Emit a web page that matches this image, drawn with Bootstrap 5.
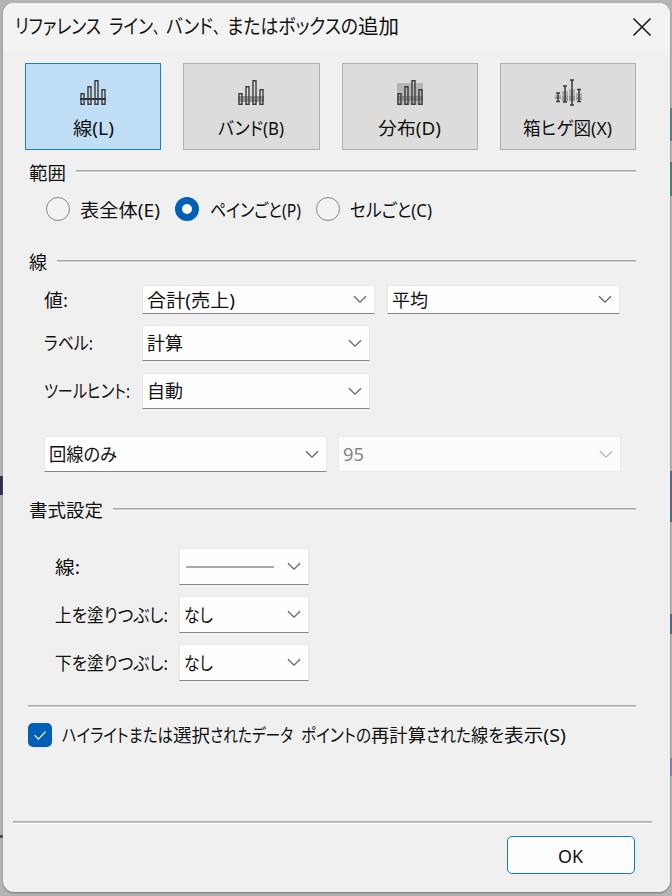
<!DOCTYPE html>
<html lang="ja">
<head>
<meta charset="utf-8">
<meta name="viewport" content="width=device-width, initial-scale=1">
<title>リファレンス ライン、バンド、またはボックスの追加</title>
<link rel="stylesheet" href="https://cdn.jsdelivr.net/npm/bootstrap@5.3.0/dist/css/bootstrap.min.css">
<style>
body{height:896px;overflow:hidden;background:#b4b4b4;color:#111;font-family:"Noto Sans","Noto Sans CJK JP",sans-serif;font-size:18.3px;line-height:24px;padding:3px 2px 4px 3px}
.backdrop-edge{position:absolute;width:3px}
.e1{left:669px;top:108px;height:33px;background:#4d8290}
.e2{left:669px;top:162px;height:34px;background:#2f8d70}
.e3{left:669px;top:471px;height:51px;background:#4b6887}
.e4{left:669px;top:614px;height:20px;background:#4b6887}
.e5{left:669px;top:758px;height:18px;background:#7887ae}
.e6{left:0;top:476px;height:19px;background:#2c2c4c}
.e7{left:0;top:835px;height:3px;background:#5e4936}
.dialog-win{position:relative;height:889px;background:#f0f0f0;border-radius:11px;overflow:hidden;box-shadow:0 1px 2px #777}
.title-strip{height:50px;background:#f3f3f3;padding:0 18.5px 2px 12px;font-size:20px}
.fit{display:inline-block;white-space:nowrap;transform-origin:0 50%;font-feature-settings:"palt"}
.fit.full{font-feature-settings:normal}
.tiles{gap:22px;padding:10px 34px 0 22px}
.tile{height:87px;border:1.5px solid #b0b0b0;border-radius:0;background:#dcdcdc;padding:6px 0 0;color:#111;font-size:18.3px;line-height:24px}
.tile.active{background:#c0def5!important;border-color:#1183d9!important;color:#111!important}
.tile svg{display:block;margin:0 auto 9px}
.rule{height:3px;background:linear-gradient(#a8a8a8 0 1px,#c9c9c9 1px 2px,#fbfbfb 2px)}
.sec{height:24px;padding-left:26px;padding-right:34px}
.sec .rule{margin-top:-2px;margin-left:10px}
.mt-sec1{margin-top:11px}
.mt-sec1 .rule{margin-top:-3px}
.form-check-input.rd{width:24px;height:24px;margin:0;border:1.5px solid #858585;background:#f3f3f3;box-shadow:none;flex:none}
.form-check-input.rd:checked{border:7.5px solid #005fb8;background:#fff}
.form-check-input.ck{width:24px;height:24px;margin:0;border:0;border-radius:5px;flex:none}
.form-check-input.ck:checked{background:#005fb8 url("data:image/svg+xml,%3Csvg xmlns='http://www.w3.org/2000/svg' viewBox='0 0 24 24'%3E%3Cpath d='M6.5 12.2l3.8 3.9 7.3-7.4' fill='none' stroke='white' stroke-width='1.2'/%3E%3C/svg%3E") center/24px no-repeat}
.combo{height:36.5px;background:#fefefe;border:1px solid #e8e8e8;border-bottom:1.5px solid #868686;border-radius:1px;padding:0 7px 0 4px;flex:none}
.combo.low{height:28.5px}
.combo.off{background:#fbfbfb;border-color:#ebebeb;color:#858585}
.combo svg{flex:none}
.combo.off svg{opacity:.45}
.w232{width:233px}.w228{width:228px}.w282{width:282.5px}.w130{width:130px}
.lb1{width:97.5px;flex:none}.lb2{width:124px;flex:none}
.pl1{padding-left:41px}.pl2{padding-left:52px}
.sample-line{width:88px;height:2px;background:#a9a9a9;margin-left:2px}
.radios{margin-top:12px;height:24px;padding-left:42.5px}
.radios .fit{margin-left:10.5px;margin-right:15px;position:relative;top:1px}
.radios .fit:last-child{margin-left:10px}
.sec2{margin-top:29px}
.row-a{margin-top:11px;height:29px}
.gapl{margin-left:12px}.gapl2{margin-left:11.5px}
.row-b{margin-top:10px;height:38px}
.row-c{margin-top:10px;height:38px}
.row-d{margin-top:25px;height:38px}
.sec3{margin-top:25px}
.row-e{margin-top:26px;height:37px}
.row-f{margin-top:11px;height:37px}
.rule-a{margin:24px 34px 0 25px}
.check-row{margin-top:14px;height:26px;padding-left:25px;gap:9.5px}
.rule-b{margin:73px 18px 0 10px}
.ok-row{margin-top:12px;padding-right:35px}
.btn-ok{width:128px;height:38px;border:1.5px solid #0f7bd0;border-radius:5px;background:#fdfdfd;color:#111;font-size:18.3px;padding:2px 1px 0 0}
</style>
</head>
<body>
<svg class="d-none" aria-hidden="true">
<symbol id="chev" viewBox="0 0 14 9"><path d="M1 1.2l6 6 6-6" fill="none" stroke="#666" stroke-width="1.3"/></symbol>
<symbol id="bars" viewBox="0 0 28 28"><path d="M2 14.7h3v10.600H2zM9 7.700h3v17.600H9zM16 1.700h3v23.600h-3zM23 10.700h3v14.600h-3z" fill="none" stroke="#3c3c3c" stroke-width="1.4"/></symbol>
</svg>
<i class="backdrop-edge e1"></i><i class="backdrop-edge e2"></i><i class="backdrop-edge e3"></i><i class="backdrop-edge e4"></i><i class="backdrop-edge e5"></i><i class="backdrop-edge e6"></i><i class="backdrop-edge e7"></i>
<main class="dialog-win">
<header class="title-strip d-flex align-items-center">
<div class="me-auto d-flex text-nowrap"><span class="fit me-2" data-w="86">リファレンス</span><span class="fit" data-w="44">ライン</span><span class="fit full" data-w="13">、</span><span class="fit" data-w="47">バンド</span><span class="fit full" data-w="14">、</span><span class="fit" data-w="131">またはボックスの</span><span class="fit" data-w="41">追加</span></div>
<svg width="20" height="20" viewBox="0 0 20 20"><path d="M1.500 1.500l17 17M18.500 1.500l-17 17" stroke="#191919" stroke-width="1.6"/></svg>
</header>
<div class="tiles d-flex">
<button class="btn tile active flex-fill w-100"><svg width="28" height="28"><use href="#bars"/><path d="M1 20h26" stroke="#333" stroke-width="1.8"/></svg><span class="fit" data-w="41">線(L)</span></button>
<button class="btn tile flex-fill w-100"><svg width="28" height="28"><path d="M1 17h26v6H1z" fill="#999"/><use href="#bars"/></svg><span class="fit" data-w="66">バンド(B)</span></button>
<button class="btn tile flex-fill w-100"><svg width="28" height="28"><path d="M1 4h26v13H1z" fill="#b5b5b5"/><path d="M1 17h26v5H1z" fill="#8d8d8d"/><path d="M1 22h26v4H1z" fill="#b5b5b5"/><use href="#bars"/></svg><span class="fit" data-w="63">分布(D)</span></button>
<button class="btn tile flex-fill w-100"><svg width="28" height="28"><path d="M1 16h6v4H1zM8 12h6v10H8zM15 10h6v12h-6zM22 14h6v7h-6z" fill="#b1b1b1"/><path d="M1 18h6v2H1zM8 17h6v5H8zM15 17h6v5h-6zM22 18h6v3h-6z" fill="#999"/><path d="M4 14v8.500M11 7v16M18 1v25M25 10.500v12M2 14h4M2 22.500h4M9 7h4M9 23h4M16 1h4M16 26h4M23 10.500h4M23 22.500h4" stroke="#393939" stroke-width="1.5"/></svg><span class="fit" data-w="89">箱ヒゲ図(X)</span></button>
</div>
<div class="sec d-flex align-items-center mt-sec1"><span class="fit" data-w="37">範囲</span><div class="rule flex-fill"></div></div>
<div class="radios d-flex align-items-center">
<input class="form-check-input rd" type="radio" name="scope"><span class="fit" data-w="80">表全体(E)</span>
<input class="form-check-input rd" type="radio" name="scope" checked><span class="fit" data-w="91">ペインごと(P)</span>
<input class="form-check-input rd" type="radio" name="scope"><span class="fit" data-w="82">セルごと(C)</span>
</div>
<div class="sec sec2 d-flex align-items-center"><span class="fit" data-w="18">線</span><div class="rule flex-fill"></div></div>
<div class="pl1 row-a d-flex align-items-center"><div class="lb1"><span class="fit" data-w="24">値:</span></div><div class="combo low w232 d-flex align-items-center justify-content-between"><span class="fit" data-w="88">合計(売上)</span><svg width="14" height="9"><use href="#chev"/></svg></div><div class="combo low w232 d-flex align-items-center justify-content-between gapl"><span class="fit" data-w="36">平均</span><svg width="14" height="9"><use href="#chev"/></svg></div></div>
<div class="pl1 row-b d-flex align-items-center"><div class="lb1"><span class="fit" data-w="49">ラベル:</span></div><div class="combo w228 d-flex align-items-center justify-content-between"><span class="fit" data-w="36">計算</span><svg width="14" height="9"><use href="#chev"/></svg></div></div>
<div class="pl1 row-c d-flex align-items-center"><div class="lb1"><span class="fit" data-w="86">ツールヒント:</span></div><div class="combo w228 d-flex align-items-center justify-content-between"><span class="fit" data-w="36">自動</span><svg width="14" height="9"><use href="#chev"/></svg></div></div>
<div class="pl1 row-d d-flex align-items-center"><div class="combo w282 d-flex align-items-center justify-content-between"><span class="fit" data-w="68">回線のみ</span><svg width="14" height="9"><use href="#chev"/></svg></div><div class="combo off w282 d-flex align-items-center justify-content-between gapl2"><span class="fit" data-w="21">95</span><svg width="14" height="9"><use href="#chev"/></svg></div></div>
<div class="sec sec3 d-flex align-items-center"><span class="fit" data-w="74">書式設定</span><div class="rule flex-fill"></div></div>
<div class="pl2 row-e d-flex align-items-center"><div class="lb2"><span class="fit" data-w="25">線:</span></div><div class="combo w130 d-flex align-items-center justify-content-between"><span class="sample-line"></span><svg width="14" height="9"><use href="#chev"/></svg></div></div>
<div class="pl2 row-f d-flex align-items-center"><div class="lb2"><span class="fit" data-w="113">上を塗りつぶし:</span></div><div class="combo w130 d-flex align-items-center justify-content-between"><span class="fit" data-w="29">なし</span><svg width="14" height="9"><use href="#chev"/></svg></div></div>
<div class="pl2 row-f d-flex align-items-center"><div class="lb2"><span class="fit" data-w="113">下を塗りつぶし:</span></div><div class="combo w130 d-flex align-items-center justify-content-between"><span class="fit" data-w="29">なし</span><svg width="14" height="9"><use href="#chev"/></svg></div></div>
<div class="rule rule-a"></div>
<label class="check-row d-flex align-items-center"><input class="form-check-input ck" type="checkbox" checked><span class="d-flex text-nowrap"><span class="fit" data-w="111">ハイライトまたは</span><span class="fit" data-w="37">選択</span><span class="fit me-2" data-w="83">されたデータ</span><span class="fit" data-w="70">ポイントの</span><span class="fit" data-w="55">再計算</span><span class="fit" data-w="45">された</span><span class="fit" data-w="33">線を</span><span class="fit" data-w="62">表示(S)</span></span></label>
<div class="rule rule-b"></div>
<div class="d-flex justify-content-end ok-row"><button class="btn btn-ok"><span class="fit" data-w="25">OK</span></button></div>
</main>
<script src="https://cdn.jsdelivr.net/npm/bootstrap@5.3.0/dist/js/bootstrap.bundle.min.js"></script>
<script>
// Each label keeps its designed width whatever font supplies the glyphs.
document.querySelectorAll('.fit').forEach(function(el){
  var n=el.getBoundingClientRect().width,w=+el.dataset.w;
  var gap=parseFloat(getComputedStyle(el).marginRight)||0;
  el.style.transform='scaleX('+(w/n)+')';
  el.style.setProperty('margin-right',(gap+w-n)+'px','important');
});
</script>
</body>
</html>
